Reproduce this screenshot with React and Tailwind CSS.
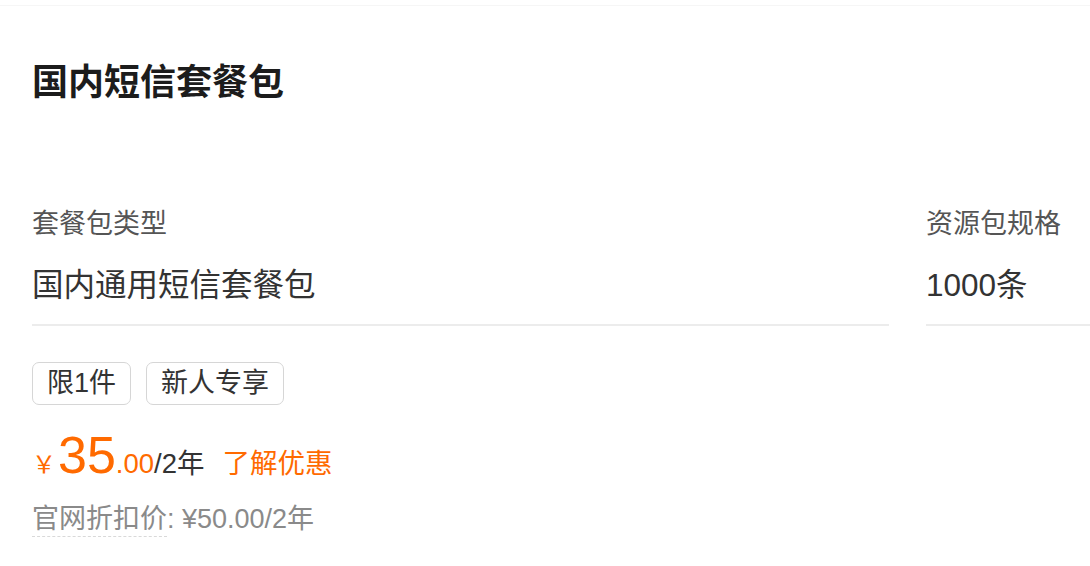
export default function App() {
  return (
    <div
      className="w-[1090px] h-[566px] overflow-hidden bg-white"
      style={{ fontFamily: '"Liberation Sans", "Noto Sans CJK SC", sans-serif' }}
    >
      <div className="h-[6px] border-b border-[#f6f6f6]" />
      <div className="pl-[32px] pt-[55px]">
        <h1 className="text-[36px] leading-[44px] font-bold text-[#1c1c1c]">国内短信套餐包</h1>

        <div className="flex gap-[37px] mt-[101px]">
          <div className="w-[857px] shrink-0 border-b-2 border-[#ececec] pb-[19px]">
            <div className="text-[27px] leading-[36px] text-[#555]">套餐包类型</div>
            <div className="mt-[23px] text-[31.5px] leading-[40px] text-[#333]">国内通用短信套餐包</div>
          </div>
          <div className="w-[400px] shrink-0 border-b-2 border-[#ececec] pb-[19px]">
            <div className="text-[27px] leading-[36px] text-[#555]">资源包规格</div>
            <div className="mt-[23px] text-[31.5px] leading-[40px] text-[#333]">1000条</div>
          </div>
        </div>

        <div className="flex gap-[15px] mt-[36px]">
          <span className="h-[43px] px-[14px] flex items-center rounded-[7px] border-[1.5px] border-[#d6d6d6] text-[27px] text-[#333]">
            限1件
          </span>
          <span className="h-[43px] px-[14px] flex items-center rounded-[7px] border-[1.5px] border-[#d6d6d6] text-[27px] text-[#333]">
            新人专享
          </span>
        </div>

        <div className="flex items-baseline mt-[24px] leading-[52px]">
          <span className="text-[24px] text-[#ff6a00] mr-[2px]" style={{ fontFamily: '"Noto Sans CJK SC", sans-serif' }}>￥</span>
          <span className="text-[52px] text-[#ff6a00]">35</span>
          <span className="text-[27.5px] text-[#ff6a00]">.00</span>
          <span className="text-[27.5px] text-[#333]">/2年</span>
          <span className="ml-[18px] text-[27.5px] text-[#ff6a00]">了解优惠</span>
        </div>

        <div className="flex items-start mt-[12px] text-[27px] leading-[34px] text-[#8a8a8a]">
          <span className="border-b-[1.5px] border-dashed border-[#d9d9d9]">官网折扣价</span>
          <span>: ¥50.00/2年</span>
        </div>
      </div>
    </div>
  );
}
